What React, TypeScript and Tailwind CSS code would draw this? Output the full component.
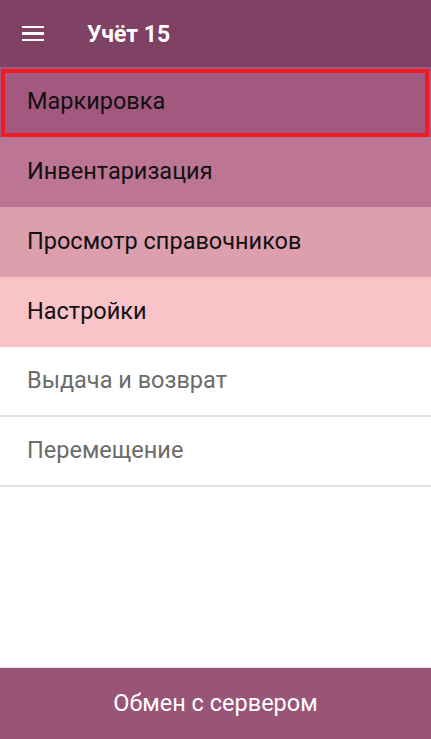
import React from "react";

const rows = [
  { label: "Маркировка", bg: "bg-[#a3587f]", text: "text-[#111111]", selected: true },
  { label: "Инвентаризация", bg: "bg-[#bd7594]", text: "text-[#111111]" },
  { label: "Просмотр справочников", bg: "bg-[#dd9fae]", text: "text-[#111111]" },
  { label: "Настройки", bg: "bg-[#f9c3c7]", text: "text-[#111111]" },
];

export default function App() {
  return (
    <div
      className="w-[431px] h-[739px] flex flex-col bg-white overflow-hidden"
      style={{ fontFamily: "Roboto, 'Noto Sans', sans-serif" }}
    >
      <div className="h-[67px] shrink-0 bg-[#7f4264] flex items-center">
        <div className="w-[22px] ml-[22px] flex flex-col gap-[4px]">
          <div className="h-[2.5px] bg-white" />
          <div className="h-[2.5px] bg-white" />
          <div className="h-[2.5px] bg-white" />
        </div>
        <div className="ml-[43px] mt-[3px] text-white text-[23px] font-bold">Учёт 15</div>
      </div>
      {rows.map((r) => (
        <div
          key={r.label}
          className={`relative h-[70px] shrink-0 flex items-center pl-[27px] ${r.bg}`}
        >
          <span className={`text-[23.5px] ${r.text}`}>{r.label}</span>
          {r.selected && (
            <div className="absolute top-[2px] left-[1px] right-[2px] bottom-0 border-4 border-[#ec1c24]" />
          )}
        </div>
      ))}
      {["Выдача и возврат", "Перемещение"].map((l) => (
        <div key={l} className="shrink-0">
          <div className="h-[68px] flex items-center pl-[27px]">
            <span className="text-[23.5px] text-[#6b6b6b]">{l}</span>
          </div>
          <div className="h-[2px] bg-[#e3e3e3]" />
        </div>
      ))}
      <div className="flex-1" />
      <div className="h-px bg-[#e6dbe1]" />
      <div className="h-[71px] shrink-0 bg-[#9a5476] flex items-center justify-center">
        <span className="text-white text-[23.5px]">Обмен с сервером</span>
      </div>
    </div>
  );
}
